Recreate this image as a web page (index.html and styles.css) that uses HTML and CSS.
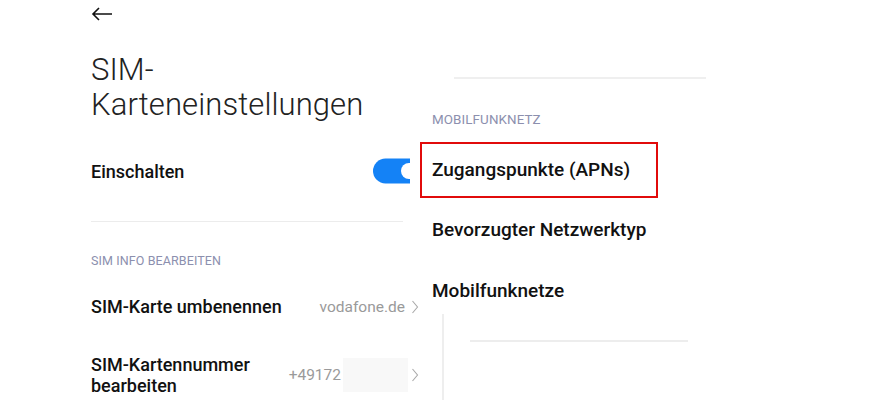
FILE: index.html
```html
<!DOCTYPE html>
<html lang="de">
<head>
    <meta charset="UTF-8">
    <title>SIM-Karteneinstellungen</title>
    <link rel="stylesheet" href="styles.css">
</head>
<body>

    <!-- Left: SIM settings screen -->
    <div class="sim-panel">
        <div class="back">
            <svg width="22" height="14" viewBox="0 0 22 14">
                <path d="M21 7H2M8 1L2 7l6 6" fill="none" stroke="#111" stroke-width="1.6"/>
            </svg>
        </div>

        <h1 class="title">SIM-<br>Karteneinstellungen</h1>

        <div class="row row-toggle">
            <span class="label">Einschalten</span>
            <svg class="toggle" width="37" height="26" viewBox="0 0 37 26">
                <rect x="0" y="0.5" width="60" height="25" rx="12.5" fill="#1482f6"/>
                <circle cx="36" cy="13" r="8" fill="#fff"/>
            </svg>
        </div>

        <div class="divider"></div>

        <div class="section">SIM INFO BEARBEITEN</div>

        <div class="row row-rename">
            <span class="label">SIM-Karte umbenennen</span>
            <span class="value">vodafone.de</span>
            <svg class="chevron" width="8" height="14" viewBox="0 0 8 14">
                <path d="M1.5 1L6.5 7L1.5 13" fill="none" stroke="#a9a9a9" stroke-width="1.1"/>
            </svg>
        </div>

        <div class="row row-number">
            <span class="label">SIM-Kartennummer<br>bearbeiten</span>
            <span class="value">+49172<span class="redacted"></span></span>
            <svg class="chevron" width="8" height="14" viewBox="0 0 8 14">
                <path d="M1.5 1L6.5 7L1.5 13" fill="none" stroke="#a9a9a9" stroke-width="1.1"/>
            </svg>
        </div>
    </div>

    <!-- Right: mobile network screen -->
    <div class="net-panel">
        <div class="net-divider"></div>
        <div class="section net-section">MOBILFUNKNETZ</div>
        <div class="net-item highlight">Zugangspunkte (APNs)</div>
        <div class="net-item">Bevorzugter Netzwerktyp</div>
        <div class="net-item net-last">Mobilfunknetze</div>
        <div class="net-bottom">
            <div class="net-bottom-line"></div>
        </div>
    </div>

</body>
</html>
```

FILE: styles.css
```css
html, body {
    margin: 0;
    height: 100%;
    overflow: hidden;
    background-color: #fff;
    font-family: Roboto, "Noto Sans", sans-serif;
    color: #111;
}

body {
    display: flex;
}

/* Left settings screen */
.sim-panel {
    width: 329px;
    padding-left: 91px;
    flex-shrink: 0;
}

.back {
    height: 14px;
    padding-top: 7px;
}

.back svg {
    display: block;
}

.title {
    margin: 31px 0 0;
    font-size: 31px;
    font-weight: 300;
    line-height: 35px;
    letter-spacing: 0.1px;
    color: #222;
}

.row {
    display: flex;
    align-items: center;
}

.label {
    font-size: 18px;
    font-weight: 500;
    line-height: 21px;
    color: #111;
}

.row-toggle {
    margin-top: 36px;
    height: 26px;
    justify-content: space-between;
    padding-right: 10px;
}

.toggle {
    display: block;
}

.divider {
    margin-top: 37px;
    width: 312px;
    height: 1px;
    background-color: #ececec;
}

.section {
    font-size: 12.5px;
    line-height: 16px;
    color: #8c8fae;
    letter-spacing: 0.1px;
}

.sim-panel .section {
    margin-top: 31px;
}

.row-rename {
    margin-top: 27px;
}

.row-number {
    margin-top: 37px;
}

.value {
    margin-left: auto;
    font-size: 15.5px;
    color: #9a9a9a;
    display: flex;
    align-items: center;
}

.row-number .value {
    margin-right: -3px;
}

.redacted {
    display: inline-block;
    width: 65px;
    height: 34px;
    margin-left: 2px;
    background-color: #f8f8f8;
}

.chevron {
    display: block;
    margin: 0 1px 0 6px;
}

/* Right network screen */
.net-panel {
    flex: 1;
    display: flex;
    flex-direction: column;
    padding-top: 77px;
}

.net-divider {
    margin-left: 34px;
    width: 252px;
    height: 2px;
    background-color: #efefef;
}

.net-section {
    margin: 33px 0 0 12px;
    font-size: 13.4px;
}

.net-item {
    width: 214px;
    margin-top: 4px;
    padding: 15px 10px 16px;
    border: 2px solid transparent;
    font-size: 19px;
    font-weight: 500;
    line-height: 21px;
    white-space: nowrap;
    color: #111;
}

.net-item.highlight {
    margin-top: 14px;
    border-color: #e10b0b;
}

.net-item.net-last {
    margin-top: 5px;
}

.net-bottom {
    flex: 1;
    margin: -5px 0 0 22px;
    border-left: 2px solid #eeeeee;
}

.net-bottom-line {
    margin: 26px 0 0 26px;
    width: 218px;
    height: 2px;
    background-color: #ededed;
}
```
